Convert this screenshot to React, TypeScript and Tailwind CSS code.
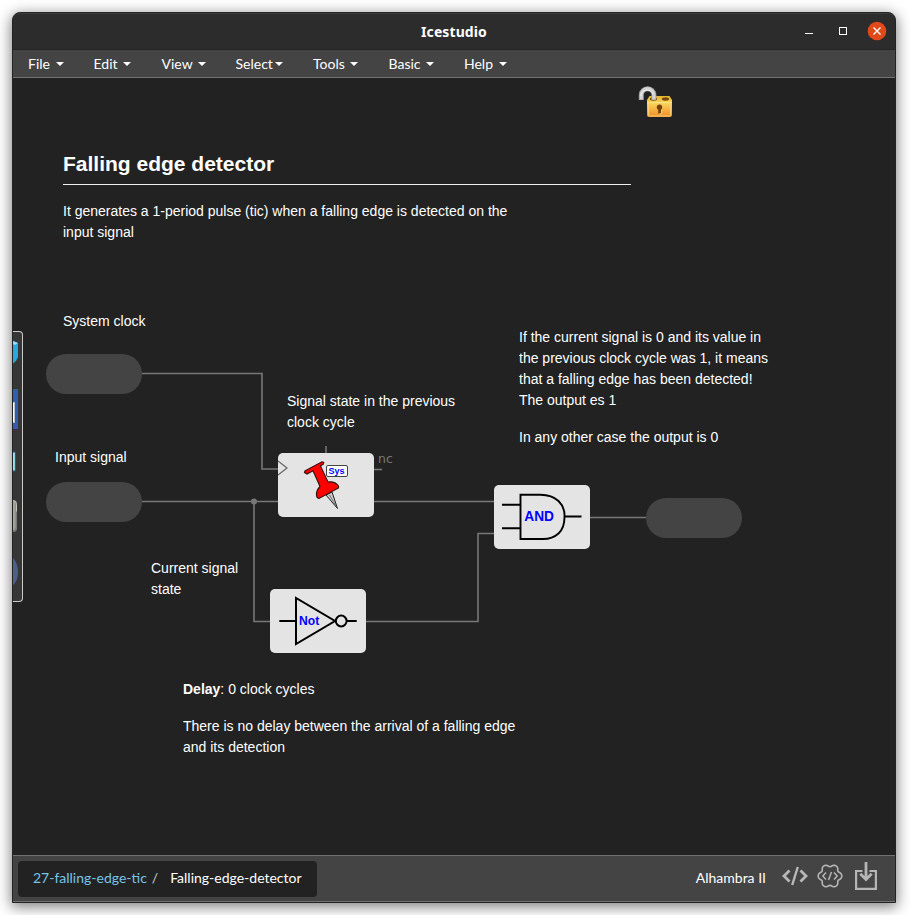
import type { ReactNode } from 'react';

const menus = [
  { label: 'File', pos: 'w-[65.5px]', caret: 'ml-[6px]' },
  { label: 'Edit', pos: 'w-[68px]', caret: 'ml-[5px]' },
  { label: 'View', pos: 'w-[74px]', caret: 'ml-[5.5px]' },
  { label: 'Select', pos: 'w-[77.5px]', caret: 'ml-[2px]' },
  { label: 'Tools', pos: 'w-[75.5px]', caret: 'ml-[5px]' },
  { label: 'Basic', pos: 'w-[75.5px]', caret: 'ml-[5px]' },
  { label: 'Help', pos: 'w-[70px]', caret: 'ml-[6px]' },
];

function TitleBar() {
  return (
    <header className="grid h-[37px] shrink-0 grid-cols-[1fr_auto_1fr] items-center rounded-t-[7px] border-t border-b border-[#242424] border-t-[#3b3b3b] bg-[#2c2c2c] pr-[7px]">
      <h1 className="col-start-2 ml-[7px] font-['Noto_Sans',sans-serif] text-[14px] leading-5 font-bold tracking-[0.1px] text-white">
        Icestudio
      </h1>
      <svg className="mb-[2px] justify-self-end" width="86" height="22" viewBox="802 20 86 22">
        <path d="M805 33.500h8" stroke="#fff" />
        <rect x="839.500" y="27.500" width="7" height="7" fill="none" stroke="#fff" />
        <circle cx="877" cy="31" r="9.300" fill="#e2491a" />
        <path d="M873.500 27.500l7 7m0-7l-7 7" stroke="#fff" strokeWidth="1.400" />
      </svg>
    </header>
  );
}

function MenuBar() {
  return (
    <nav className="flex h-[28px] shrink-0 items-center border-b border-[#727272] bg-[#444] pl-[15px] text-[14px] text-white">
      {menus.map((m) => (
        <div key={m.label} className={`flex items-center ${m.pos}`}>
          <span>{m.label}</span>
          <svg className={`mt-px ${m.caret}`} width="8" height="4" viewBox="0 0 8 4">
            <path d="M0 0h8L4 4z" fill="#fff" />
          </svg>
        </div>
      ))}
    </nav>
  );
}

function Note({ className, children }: { className: string; children: ReactNode }) {
  return <div className={`absolute text-[14px] leading-[21px] whitespace-nowrap text-white ${className}`}>{children}</div>;
}

function Port({ className }: { className: string }) {
  return <div className={`absolute h-10 w-24 rounded-full bg-[#444] ${className}`} />;
}

function Block({ className, children }: { className: string; children: ReactNode }) {
  return (
    <div className={`absolute h-16 w-24 rounded-[5px] bg-[#e4e4e4] ${className}`}>
      <svg width="96" height="64" viewBox="0 0 96 64" fontFamily="Liberation Sans, Arial, sans-serif" fontWeight="bold" fill="none">
        {children}
      </svg>
    </div>
  );
}

function Padlock() {
  return (
    <svg className="absolute top-[84px] left-[637px]" width="38" height="36" viewBox="637 84 38 36">
      <defs>
        <linearGradient id="lockBody" x2="0" y2="1">
          <stop stopColor="#e5b62f" />
          <stop offset=".35" stopColor="#f8d35a" />
          <stop offset="1" stopColor="#f38b2b" />
        </linearGradient>
      </defs>
      <path d="M649.5 96h20l2.500 4v15q0 2-2 2h-21q-2 0-2-2v-15z" fill="url(#lockBody)" />
      <ellipse cx="653.500" cy="99" rx="3.700" ry="1.700" fill="#76490a" />
      <ellipse cx="665.500" cy="99" rx="3.700" ry="1.700" fill="#76490a" />
      <path d="M648.500 103v12q0 1 1 1h20q1 0 1-1v-12" fill="none" stroke="#fbd173" />
      <path d="M647.500 102.500h24" stroke="#fbe27c" strokeWidth="1.200" />
      <path d="M641.300 100v-5a6.300 6.300 0 0 1 12.600 0v5" fill="none" stroke="#9b9b9b" strokeWidth="5" />
      <path d="M641.300 99.500v-4.500a6.300 6.300 0 0 1 12.600 0v4.500" fill="none" stroke="#d4d4d4" strokeWidth="3.200" />
      <path d="M641 96v-1.500a6.300 6.300 0 0 1 12 0" fill="none" stroke="#f1f1f1" />
      <circle cx="659.500" cy="107.300" r="2.700" fill="#76410a" />
      <path d="M658.200 108h2.800v5.500h-2.800z" fill="#76410a" />
      <path d="M661.500 110v3.800h-2" fill="none" stroke="#ffe07f" strokeWidth=".8" />
    </svg>
  );
}

function Toolbox() {
  return (
    <aside className="absolute top-[331px] left-[13px] h-[271px] w-[10px] rounded-r-[4px] border border-l-0 border-[#cacaca] bg-[#363636]">
      <svg width="9" height="269" viewBox="13 332 9 269">
        <path d="M13 341l5 2v14l-2 4-3 2.500z" fill="#27a9df" />
        <path d="M13 341l5 2-3 2-2-1z" fill="#9adcf5" />
        <path d="M13 389h5v40h-5z" fill="#315eb0" />
        <path d="M13 402.500h1.500v20H13" fill="#fff" stroke="#b8c2d4" />
        <path d="M13 452h1.500q1 0 1 1v17q0 1-1 1H13" fill="#9bdff0" stroke="#19617b" strokeWidth="1.200" />
        <path d="M13 500q4 0 4 4v25q0 3-4 3z" fill="#7c7c74" />
        <path d="M13 501q2.500 0 2.500 4v23q0 2-2.500 2z" fill="#a3a39a" />
        <path d="M13 500.500q3.500 0 3.500 4v7" fill="none" stroke="#c4c4be" />
        <path d="M13 558q5 5 5 14t-5 13z" fill="#4c6189" />
      </svg>
    </aside>
  );
}

function Wires() {
  return (
    <svg className="absolute top-0 left-0" width="910" height="915" viewBox="0 0 910 915">
      <g fill="none" stroke="#777" strokeWidth="1.600">
        <path d="M142 373.500H262V469H278" />
        <path d="M326 446v8" />
        <path d="M374 469.500h8" />
        <path d="M142 501.500H494" />
        <path d="M254 501.500V621.500H270" />
        <path d="M366 621.500H478V533.500H494" />
        <path d="M590 517.500H646" />
      </g>
      <circle cx="254" cy="501.500" r="3" fill="#777" />
    </svg>
  );
}

function Canvas() {
  return (
    <main className="relative min-h-0 flex-1 overflow-hidden bg-[#222] font-['Liberation_Sans',Arial,sans-serif]">
      <div className="-mt-[78px] -ml-[13px] h-[915px] w-[910px]">
        <div className="relative h-full w-full">
          <Wires />
          <Toolbox />
          <Padlock />
          <h2 className="absolute top-[149px] left-[63px] h-9 w-[568px] border-b border-[#eee] text-[21px] leading-[30px] font-bold text-white">
            Falling edge detector
          </h2>
          <Note className="top-[201px] left-[63px]">
            It generates a 1-period pulse (tic) when a falling edge is detected on the
            <br />
            input signal
          </Note>
          <Note className="top-[311px] left-[63px]">System clock</Note>
          <Note className="top-[447px] left-[55px]">Input signal</Note>
          <Note className="top-[391px] left-[287px]">
            Signal state in the previous
            <br />
            clock cycle
          </Note>
          <Note className="top-[327px] left-[519px]">
            If the current signal is 0 and its value in
            <br />
            the previous clock cycle was 1, it means
            <br />
            that a falling edge has been detected!
            <br />
            The output es 1<p className="mt-4">In any other case the output is 0</p>
          </Note>
          <Note className="top-[558px] left-[151px]">
            Current signal
            <br />
            state
          </Note>
          <Note className="top-[679px] left-[183px]">
            <strong>Delay</strong>: 0 clock cycles
            <p className="mt-4">
              There is no delay between the arrival of a falling edge
              <br />
              and its detection
            </p>
          </Note>
          <Port className="top-[354px] left-[46px]" />
          <Port className="top-[482px] left-[46px]" />
          <Port className="top-[498px] left-[646px]" />
          <span className="absolute top-[450px] left-[378px] font-['DejaVu_Sans',sans-serif] text-[12.5px] leading-[18px] text-[#777]">nc</span>
          <Block className="top-[453px] left-[278px]">
            <path d="M0 8L9 15L0 22" stroke="#666" strokeWidth="1.200" />
            <path d="M48 42l11.500 13.500L54 39z" fill="#c9c9c9" stroke="#222" />
            <path d="M51.500 42l8 13.500" stroke="#555" strokeWidth=".7" />
            <path
              d="M26.500 19.500L27 17.800L44 8.800L45.700 9.300L45.500 11L42.500 13L50 29Q57 28 60.500 33L60.500 35L41 45.500Q38.500 45 38.500 42Q38 37.500 42 33.500L35 17.800L29 21z"
              fill="#f00"
              stroke="#301010"
              strokeWidth="1.100"
            />
            <rect x="48.500" y="12.500" width="21" height="11" rx="1.500" fill="#fff" stroke="#444" />
            <text x="50.500" y="21" fontSize="9" fill="#00f" textLength="16">Sys</text>
          </Block>
          <Block className="top-[589px] left-[270px]">
            <path d="M9.300 32h16.500M76.500 32h10.200M26 9v46L65 32z" stroke="#000" strokeWidth="2" />
            <circle cx="71.200" cy="32" r="5.400" stroke="#000" strokeWidth="2" />
            <text x="29" y="36" fontSize="12" fill="#00f" textLength="20.200" lengthAdjust="spacingAndGlyphs">Not</text>
          </Block>
          <Block className="top-[485px] left-[494px]">
            <path d="M8 19.700h18M8 43.300h18M70.500 31.500h17M26.500 9.700h20Q58 9.700 64.500 16T70.500 32Q70.500 43 64.500 48.500T49 54H26.500z" stroke="#000" strokeWidth="1.900" />
            <text x="30.300" y="35.700" fontSize="14" fill="#00f" textLength="29.700" lengthAdjust="spacingAndGlyphs">AND</text>
          </Block>
        </div>
      </div>
    </main>
  );
}

function CodeIcon() {
  return (
    <svg width="26" height="22" viewBox="0 0 26 22" fill="none" stroke="#b8b8b8" strokeWidth="2.800">
      <path d="M7.500 5.500L2 11l5.500 5.500M18.500 5.500L24 11l-5.500 5.500" />
      <path d="M15.800 2L10.200 20" strokeWidth="2.400" />
    </svg>
  );
}

// Six rounded teeth, sampled every five degrees around the centre.
const gearOutline = Array.from({ length: 72 }, (_, i) => {
  const a = (i * Math.PI) / 36;
  const r = 10.7 + 1.3 * Math.cos(6 * a) - 0.2 * Math.cos(12 * a);
  return `${(13 + r * Math.cos(a)).toFixed(2)},${(13 + r * Math.sin(a)).toFixed(2)}`;
}).join(' ');

function GearIcon() {
  return (
    <svg width="26" height="26" viewBox="0 0 26 26" fill="none" stroke="#b5b5b5" strokeWidth="1.600" strokeLinejoin="round">
      <polygon points={gearOutline} />
      <path d="M9 9.500L5.800 13L9 16.500M17 9.500L20.200 13L17 16.500M14.500 9L11.500 17" strokeWidth="1.500" />
    </svg>
  );
}

function DownloadIcon() {
  return (
    <svg className="ml-1" width="22" height="29" viewBox="0 0 22 29" fill="none" stroke="#b5b5b5" strokeWidth="2.200">
      <path d="M7.500 9H1.100v17.900h19.800V9h-6.400" />
      <path d="M11 0v17.500M5.300 11.800L11 17.500l5.700-5.700" strokeWidth="2.800" />
    </svg>
  );
}

function Footer() {
  return (
    <footer className="flex h-[47px] shrink-0 items-center justify-between border-y border-[#707070] bg-[#444] pr-[18px] pl-[5px] text-[14px]">
      <div className="flex h-9 w-[299px] items-center rounded-[4px] bg-[#222] pb-[2px] pl-[15px] whitespace-nowrap">
        <span className="text-[#77c4e6]">27-falling-edge-tic</span>
        <span className="ml-[5px] text-[#ccc]">/</span>
        <span className="ml-[12px] text-white">Falling-edge-detector</span>
      </div>
      <div className="flex items-center gap-4 pb-[2px]">
        <span className="text-white">Alhambra II</span>
        <div className="flex items-center gap-[8.5px] pb-[3px]">
          <CodeIcon />
          <GearIcon />
          <DownloadIcon />
        </div>
      </div>
    </footer>
  );
}

export default function App() {
  return (
    <div className="h-[915px] w-[910px] overflow-hidden bg-white px-[12px] pt-[12px] font-['Lato',sans-serif]">
      <div className="flex h-[891px] w-[884px] flex-col rounded-t-[8px] border border-[#242424] bg-[#222] shadow-[0_3px_14px_1px_rgba(0,0,0,0.5)]">
        <TitleBar />
        <MenuBar />
        <Canvas />
        <Footer />
      </div>
    </div>
  );
}
